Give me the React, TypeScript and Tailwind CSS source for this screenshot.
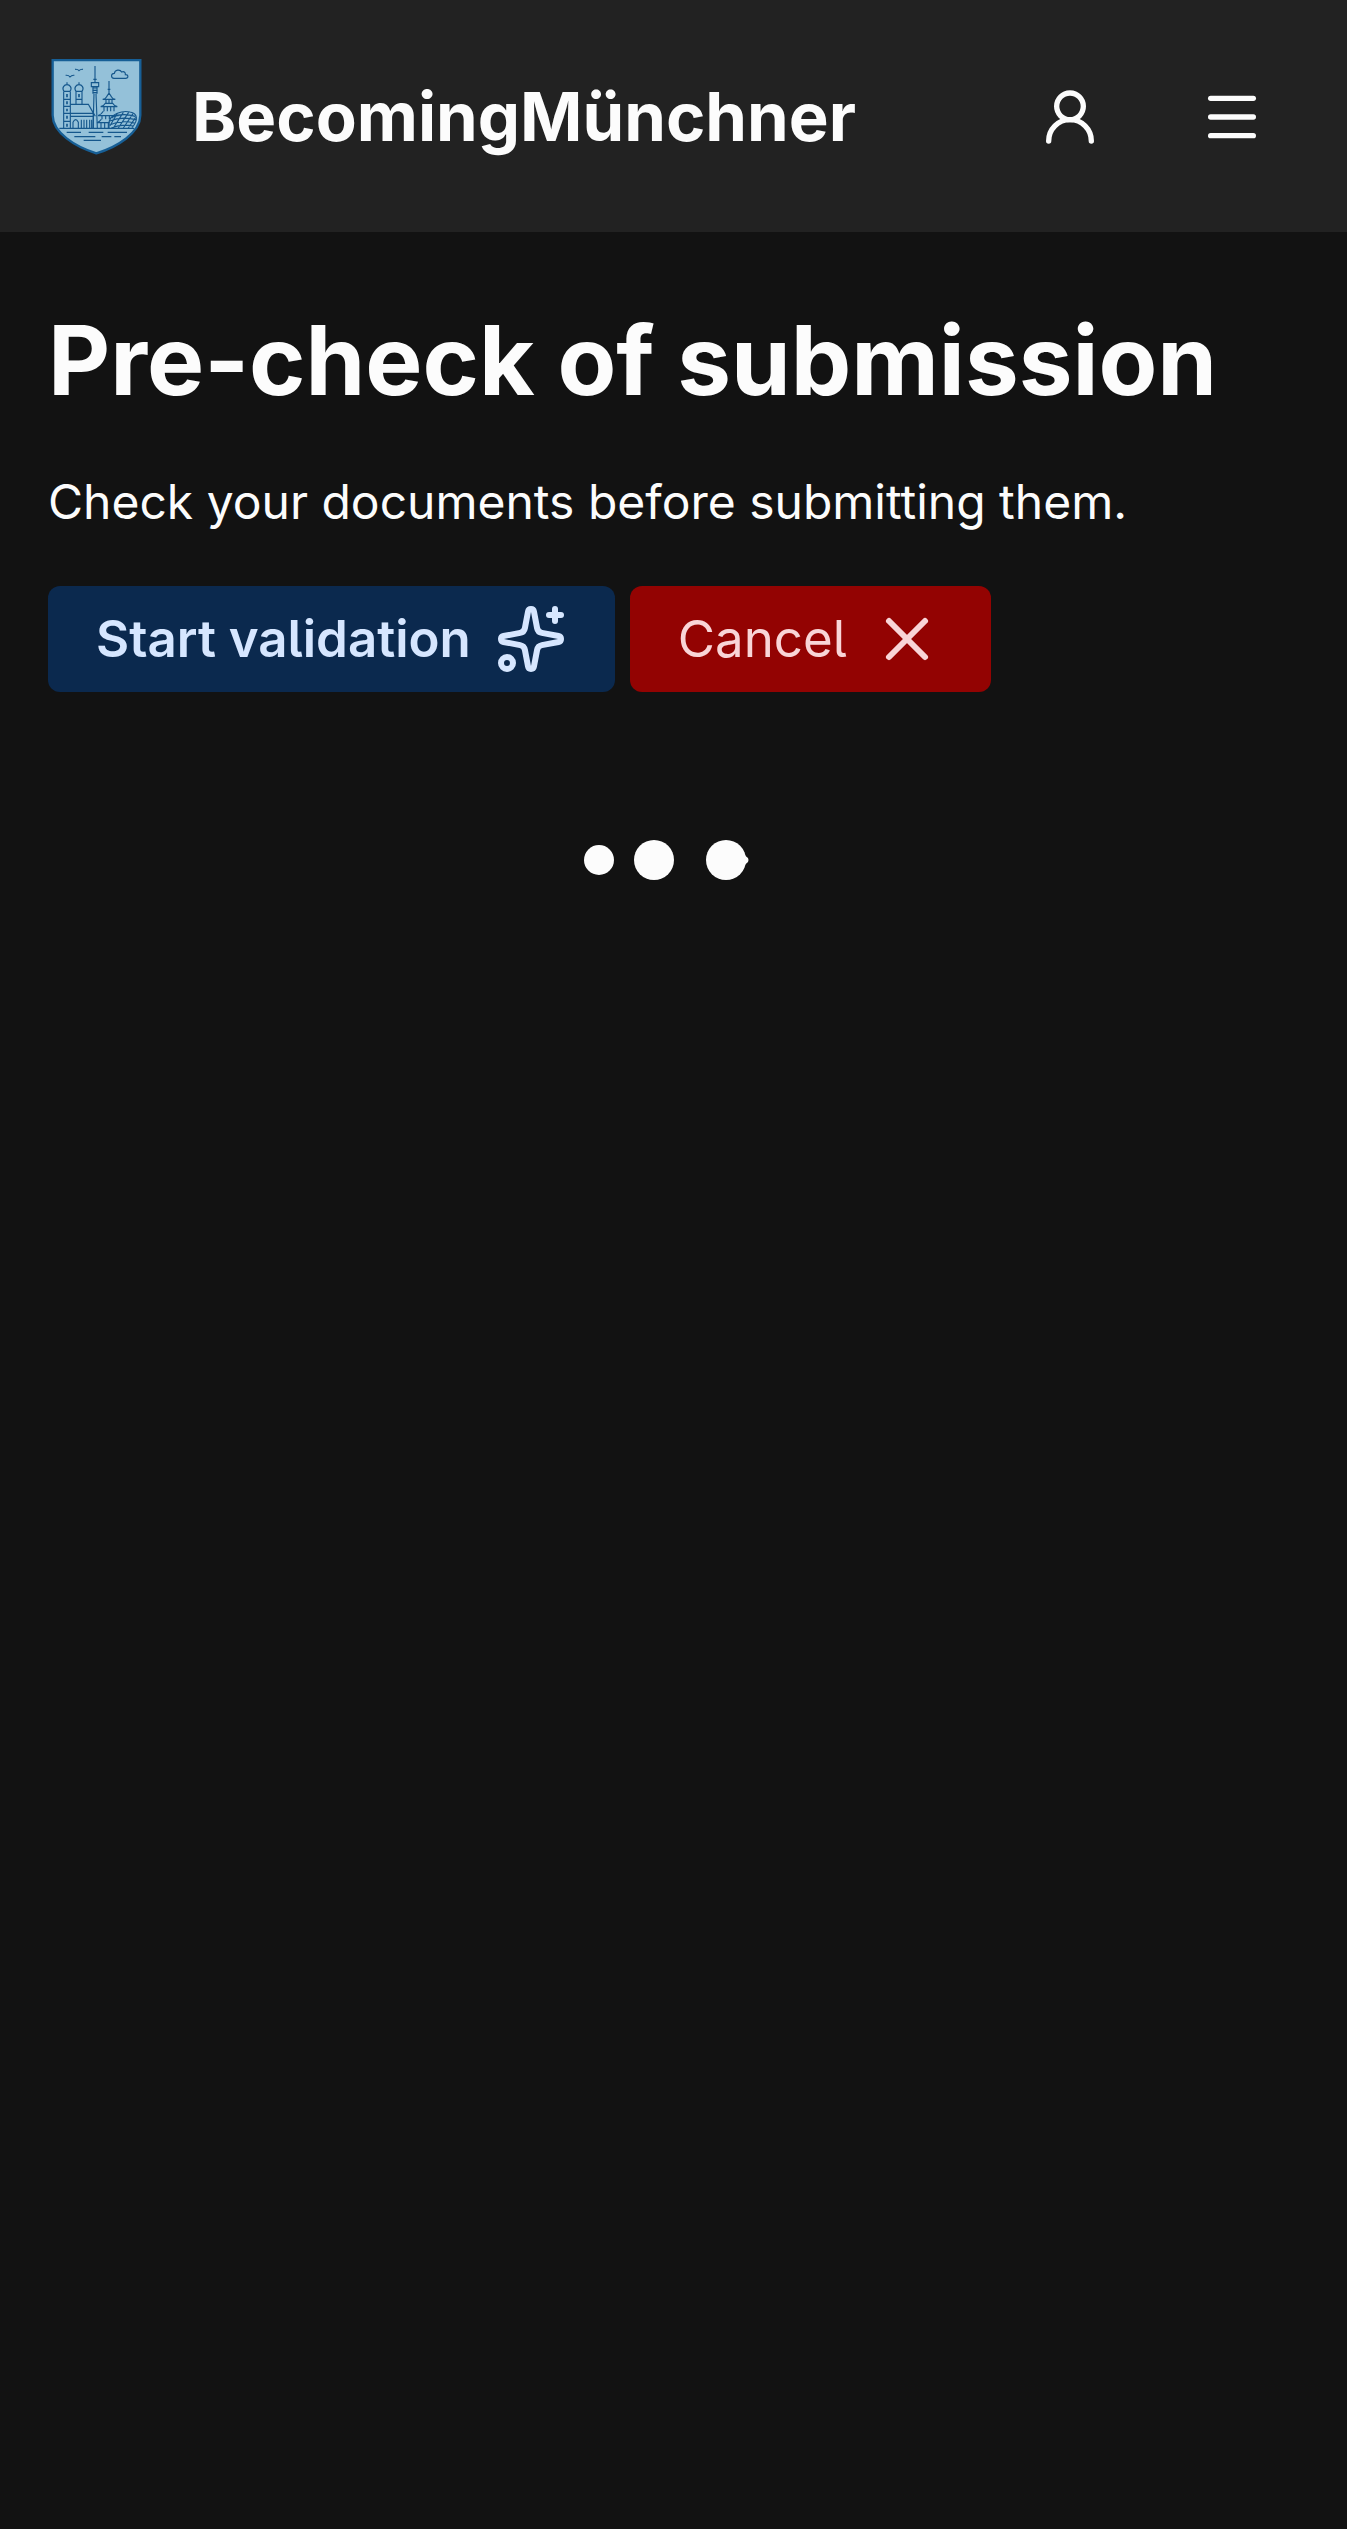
import { Menu, Sparkles, UserRound, X } from "lucide-react"

function Logo() {
  return (
    <svg viewBox="24 27 288 288" className="size-24" fill="none" stroke="#15578c" strokeWidth={3.4} aria-hidden="true">
      <path
        d="M38 30H301V196C301 248 232 291 169 310C106 291 38 248 38 196Z"
        fill="#94c1d9"
        stroke="#175f96"
        strokeWidth={7}
      />
      {/* birds */}
      <path d="M77 76Q86 75 90 81Q95 75 103 76M105 58Q113 57 117 62Q122 57 129 58" />
      {/* cloud */}
      <path d="M222 85C212 84 212 70 223 70C225 59 240 57 245 66C253 63 257 68 256 74C266 74 266 85 257 85Z" />
      {/* church towers */}
      <path d="M81 97V104M72 124C64 113 73 104 81 104C89 104 98 113 90 124ZM117 97V104M108 124C100 113 109 104 117 104C125 104 134 113 126 124Z" />
      <path d="M71 125V235M91 125V235M71 148H91M71 169H91M71 190H91M71 214H91M108 125V162M126 125V162M108 148H126" />
      <path d="M81 132V142M81 154V163M81 176V184M81 197V206M81 221V230M117 132V142" strokeWidth={5} />
      {/* nave */}
      <path d="M91 163H145L160 190H91M160 190V235M91 199H162M145 163L166 199" />
      <path d="M99 235V217Q107 201 115 217V235M124 235V209M132 235V209M140 235V209M149 235V209M155 235V209" />
      {/* tv tower */}
      <path d="M165 48V97M160 88H170M154 98H176V110H154ZM157 114H173M157 121H173M157 128H173M159 110V131M171 110V131M162 131L159 235M168 131L172 235" />
      {/* pagoda */}
      <path d="M207 93V130M203 118H211M207 129L200 140Q196 147 188 148H226Q218 147 214 140ZM198 148V160M207 149V160M216 148V160M196 160Q192 168 182 170H232Q222 168 218 160ZM192 171V184M202 171V184M212 171V184M222 171V184M190 184Q184 194 174 197H236M186 198V208M197 198V208M208 198V208M218 198V205M184 208Q180 215 171 218H209M183 219V235M194 219V235M205 219V235" />
      {/* arena */}
      <path d="M207 216C213 191 247 181 270 186C294 190 295 211 276 233M207 216V235" />
      <path d="M217 201Q248 188 286 199M209 213Q245 198 288 209M208 225Q244 209 284 219M214 234Q244 221 279 228M232 190L210 227M250 187L220 234M266 187L235 234M279 191L250 234M287 202L265 234" />
      {/* ground and water */}
      <path d="M58 235H282M80 247H123M146 247H190M203 247H261M103 260H166M185 260H214M223 260H243M131 271H183" />
    </svg>
  )
}

function LoadingDots() {
  return (
    <svg viewBox="0 0 241 240" className="mx-auto mt-12 h-60 w-[241px]" fill="#fcfcfc" role="img" aria-label="Loading">
      <circle cx="46" cy="120" r="15" />
      <circle cx="101" cy="120" r="20" />
      <circle cx="173" cy="120" r="20" />
      <path d="M190 112Q192 116 195 118Q196 120 195 122Q192 124 190 128Z" />
    </svg>
  )
}

export default function App() {
  return (
    <div className="min-h-screen bg-[#121212] font-['Inter',sans-serif] text-[#fcfcfc] [font-feature-settings:'cv05']">
      <header className="flex h-[232px] items-center justify-between bg-[#222222] pl-12 pr-[83px] pt-0.5">
        <a href="#" className="flex items-center gap-12">
          <span className="pb-5">
            <Logo />
          </span>
          <span className="text-[67px] font-bold">BecomingMünchner</span>
        </a>
        <nav className="flex items-center gap-[98px]">
          <button type="button" aria-label="Account">
            <UserRound className="size-16" />
          </button>
          <button type="button" aria-label="Menu">
            <Menu className="size-16" />
          </button>
        </nav>
      </header>

      <main className="px-12 pt-[70px]">
        <h1 className="text-[96px] font-bold leading-[116px]">Pre-check of submission</h1>
        <p className="mt-12 text-[48px] leading-[72px]">Check your documents before submitting them.</p>
        <div className="mt-12 flex gap-[15px]">
          <button
            type="button"
            className="flex h-[106px] items-center gap-6 rounded-xl bg-[#0b294e] px-12 text-[51px] font-semibold text-[#d6e6ff]"
          >
            Start validation
            <Sparkles className="size-[72px]" />
          </button>
          <button
            type="button"
            className="flex h-[106px] items-center gap-6 rounded-xl bg-[#930302] px-12 text-[51px] text-[#f9d5d7]"
          >
            Cancel
            <X className="size-[72px]" />
          </button>
        </div>
        <LoadingDots />
      </main>
    </div>
  )
}
